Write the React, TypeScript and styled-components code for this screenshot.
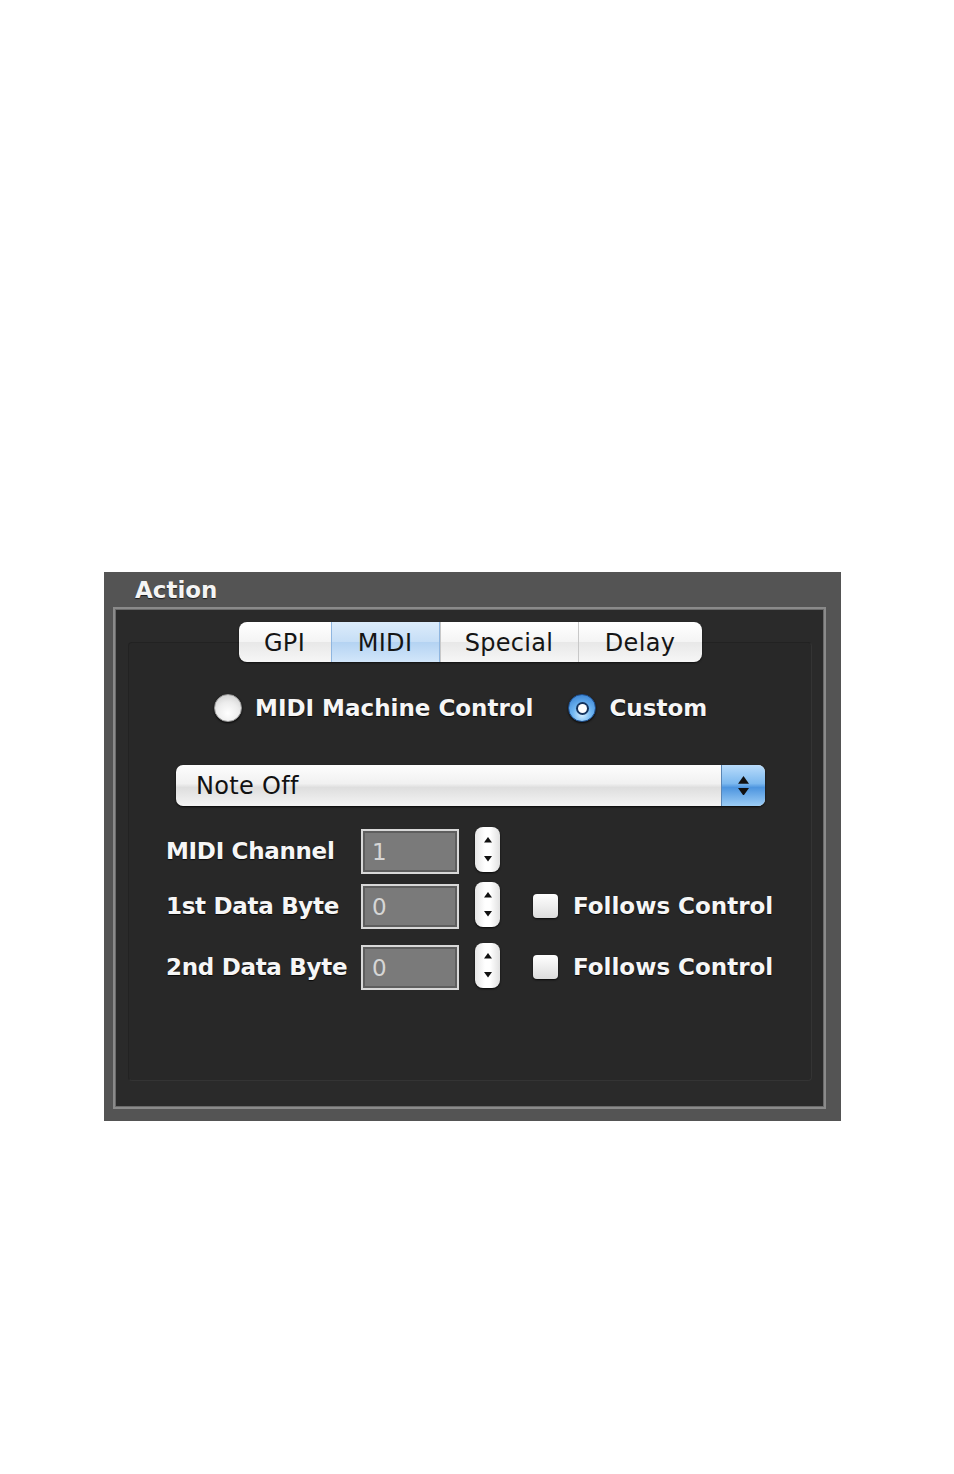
import styled, { createGlobalStyle } from "styled-components";

const GlobalStyle = createGlobalStyle`
  html, body {
    margin: 0;
    padding: 0;
    background: #ffffff;
  }
  body {
    font-family: "DejaVu Sans", "Liberation Sans", sans-serif;
  }
`;

const Page = styled.div`
  padding: 572px 0 0 104px;
  min-height: 1474px;
  box-sizing: border-box;
`;

const Panel = styled.section`
  width: 737px;
  height: 549px;
  background: #545454;
  box-sizing: border-box;
  padding: 0 15px 0 9px;
  display: flex;
  flex-direction: column;
`;

const Title = styled.h2`
  margin: 0;
  height: 35px;
  padding-left: 22px;
  display: flex;
  align-items: center;
  font-size: 23px;
  font-weight: bold;
  color: #f4f4f4;
  text-shadow: 0 1px 1px rgba(0, 0, 0, 0.7);
`;

const Box = styled.div`
  height: 502px;
  background: #2a2a2a;
  border: 2px solid #8a8a8a;
  box-shadow: inset 0 0 0 1px #6a6a6a;
  box-sizing: border-box;
  padding: 13px 12px 0 13px;
`;

const TabView = styled.div`
  display: flex;
  flex-direction: column;
  align-items: center;
`;

const TabBar = styled.div`
  position: relative;
  z-index: 1;
  display: flex;
  height: 40px;
  border-radius: 8px;
  background: linear-gradient(#ffffff 0%, #f4f4f4 50%, #e8e8e8 51%, #f6f6f6 100%);
  box-shadow: 0 1px 2px rgba(0, 0, 0, 0.6);
  overflow: hidden;
`;

const Tab = styled.div<{ $active?: boolean; $w: number }>`
  width: ${(p) => p.$w}px;
  display: flex;
  align-items: center;
  justify-content: center;
  padding-top: 2px;
  font-size: 24px;
  letter-spacing: 0.3px;
  color: #151515;
  border-left: 1px solid #c8c8c8;
  &:first-child {
    border-left: none;
  }
  background: ${(p) =>
    p.$active
      ? "linear-gradient(#dcecfb 0%, #c6def6 50%, #b4d3f2 51%, #d2e6fa 100%)"
      : "transparent"};
  ${(p) => p.$active && "border-left-color: #8fb6e0; border-right: 1px solid #8fb6e0;"}
`;

const TabBody = styled.div`
  margin-top: -20px;
  align-self: stretch;
  height: 439px;
  background: #282828;
  border: 1px solid #222;
  border-right-color: #343434;
  border-bottom-color: #343434;
  border-radius: 4px;
  box-sizing: border-box;
  padding-top: 45px;
`;

const RadioRow = styled.div`
  display: flex;
  align-items: center;
  padding-left: 85px;
  height: 40px;
`;

const RadioItem = styled.label`
  display: flex;
  align-items: center;
  gap: 13px;
  margin-right: 35px;
`;

const RadioDot = styled.span<{ $on?: boolean }>`
  flex-shrink: 0;
  width: 28px;
  height: 28px;
  border-radius: 50%;
  box-sizing: border-box;
  display: flex;
  align-items: center;
  justify-content: center;
  box-shadow: 0 1px 2px rgba(0, 0, 0, 0.8);
  background: ${(p) =>
    p.$on
      ? "radial-gradient(circle at 50% 75%, #d6efff 0%, #6fb6f2 40%, #2f78cc 100%)"
      : "radial-gradient(circle at 50% 70%, #ffffff 0%, #ececec 50%, #c6c6c6 100%)"};
  border: 1px solid ${(p) => (p.$on ? "#1c4e8e" : "#9a9a9a")};
  &::after {
    content: "";
    display: ${(p) => (p.$on ? "block" : "none")};
    width: 9px;
    height: 9px;
    border-radius: 50%;
    background: #fff;
    box-shadow: 0 0 0 2px #15335c;
  }
`;

const LightText = styled.span`
  font-size: 23px;
  font-weight: bold;
  color: #f6f6f6;
  text-shadow: 0 1px 1px rgba(0, 0, 0, 0.8);
  white-space: nowrap;
`;

const FieldLabel = styled(LightText)`
  letter-spacing: -0.3px;
`;

const Popup = styled.div`
  margin: 37px 46px 0 47px;
  height: 41px;
  display: flex;
  border-radius: 7px;
  overflow: hidden;
  box-shadow: 0 1px 2px rgba(0, 0, 0, 0.8);
  background: linear-gradient(#fdfdfd 0%, #f1f1f1 45%, #dedede 55%, #f4f4f4 100%);
`;

const PopupLabel = styled.div`
  flex: 1;
  display: flex;
  align-items: center;
  padding-left: 20px;
  font-size: 24px;
  letter-spacing: 0.3px;
  color: #111;
`;

const PopupArrows = styled.div`
  width: 43px;
  display: flex;
  flex-direction: column;
  align-items: center;
  justify-content: center;
  gap: 4px;
  background: linear-gradient(#b9dcfb 0%, #7db9ef 45%, #4d95df 55%, #9ccdf6 100%);
  border-left: 1px solid #5a86b5;
`;

const Form = styled.div`
  margin-top: 22px;
  padding-left: 37px;
  display: flex;
  flex-direction: column;
`;

const FieldRow = styled.div<{ $top: number }>`
  display: grid;
  grid-template-columns: 195px 98px 41px auto;
  align-items: center;
  margin-top: ${(p) => p.$top}px;
  height: 46px;
`;

const NumField = styled.div`
  height: 45px;
  box-sizing: border-box;
  background: #7a7a7a;
  border: 2px solid #d8d8d8;
  box-shadow: inset 0 0 0 2px #5e5e5e;
  display: flex;
  align-items: center;
  padding-left: 9px;
  padding-top: 2px;
  font-size: 23px;
  color: #d6d6d6;
`;

const Stepper = styled.div`
  margin-left: 16px;
  width: 25px;
  height: 45px;
  border-radius: 8px;
  background: linear-gradient(90deg, #e6e6e6, #ffffff 40%, #ffffff 60%, #e0e0e0);
  box-shadow: 0 1px 2px rgba(0, 0, 0, 0.8);
  display: flex;
  flex-direction: column;
  align-items: center;
  justify-content: center;
  gap: 13px;
  margin-top: -3px;
`;

const CheckItem = styled.div`
  margin-left: 33px;
  display: flex;
  align-items: center;
  gap: 15px;
`;

const CheckBox = styled.span`
  flex-shrink: 0;
  width: 25px;
  height: 24px;
  border-radius: 4px;
  background: linear-gradient(#ffffff 0%, #eeeeee 50%, #dcdcdc 100%);
  box-shadow: 0 1px 2px rgba(0, 0, 0, 0.8);
`;

function Tri({ up, size = 10 }: { up?: boolean; size?: number }) {
  return (
    <svg width={size} height={size * 0.7} viewBox="0 0 10 7">
      <path d={up ? "M5 0 L10 7 L0 7 Z" : "M0 0 L10 0 L5 7 Z"} fill="#111" />
    </svg>
  );
}

const rows = [
  { label: "MIDI Channel", value: "1", top: 0, follows: false },
  { label: "1st Data Byte", value: "0", top: 9, follows: true },
  { label: "2nd Data Byte", value: "0", top: 15, follows: true },
];

export default function App() {
  return (
    <Page>
      <GlobalStyle />
      <Panel>
        <Title>Action</Title>
        <Box>
          <TabView>
            <TabBar>
              <Tab $w={92}>GPI</Tab>
              <Tab $w={107} $active>
                MIDI
              </Tab>
              <Tab $w={137}>Special</Tab>
              <Tab $w={123}>Delay</Tab>
            </TabBar>
            <TabBody>
              <RadioRow>
                <RadioItem>
                  <RadioDot />
                  <LightText>MIDI Machine Control</LightText>
                </RadioItem>
                <RadioItem>
                  <RadioDot $on />
                  <LightText>Custom</LightText>
                </RadioItem>
              </RadioRow>
              <Popup>
                <PopupLabel>Note Off</PopupLabel>
                <PopupArrows>
                  <Tri up size={11} />
                  <Tri size={11} />
                </PopupArrows>
              </Popup>
              <Form>
                {rows.map((r) => (
                  <FieldRow key={r.label} $top={r.top}>
                    <FieldLabel>{r.label}</FieldLabel>
                    <NumField>{r.value}</NumField>
                    <Stepper>
                      <Tri up size={8} />
                      <Tri size={8} />
                    </Stepper>
                    {r.follows ? (
                      <CheckItem>
                        <CheckBox />
                        <LightText>Follows Control</LightText>
                      </CheckItem>
                    ) : (
                      <span />
                    )}
                  </FieldRow>
                ))}
              </Form>
            </TabBody>
          </TabView>
        </Box>
      </Panel>
    </Page>
  );
}
